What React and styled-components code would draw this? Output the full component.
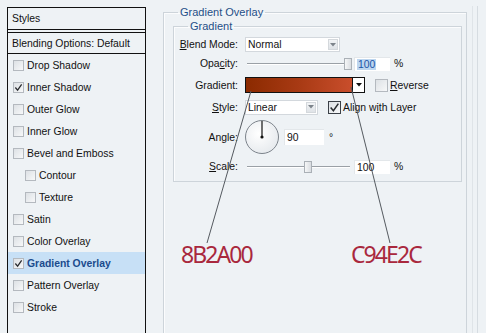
import React from "react";
import styled, { createGlobalStyle } from "styled-components";

const Global = createGlobalStyle`
  html, body { margin: 0; padding: 0; background: #eef2f5; overflow: hidden; }
  body { font-family: "Liberation Sans", Arial, sans-serif; font-size: 10.4px; color: #111; }
  #root { width: 486px; height: 333px; }
`;

const Page = styled.div`
  position: relative;
  display: flex;
  align-items: flex-start;
  width: 486px;
  height: 333px;
  overflow: hidden;
  padding-left: 7px;
  box-sizing: border-box;
`;

const StylesPanel = styled.div`
  margin-top: 7px;
  width: 139px;
  height: 340px;
  box-sizing: border-box;
  border: 1px solid #111;
  border-bottom: none;
  flex: none;
  background: #eef2f5;
`;

const PanelHead = styled.div`
  display: flex;
  align-items: center;
  height: ${(p) => p.$h}px;
  padding-left: 4px;
  border-bottom: ${(p) => (p.$double ? "4px double #111" : "1px solid #111")};
`;

const StyleItem = styled.div`
  display: flex;
  align-items: center;
  gap: 3px;
  height: 22px;
  padding-left: ${(p) => (p.$nested ? 17 : 5)}px;
  background: ${(p) => (p.$active ? "#c7e0f6" : "transparent")};
  color: ${(p) => (p.$active ? "#1b4b8d" : "#111")};
  font-weight: ${(p) => (p.$active ? 700 : 400)};
`;

const Box = styled.span`
  display: inline-flex;
  align-items: center;
  justify-content: center;
  width: ${(p) => p.$size}px;
  height: ${(p) => p.$size}px;
  box-sizing: border-box;
  border: 1px solid ${(p) => (p.$dark ? "#3b4047" : "#b4b9bf")};
  background: linear-gradient(135deg, #dde1e5, #f7f8f9);
  flex: none;
`;

const Main = styled.div`
  display: flex;
  margin-left: 17px;
  margin-top: 6px;
`;

const Outer = styled.fieldset`
  margin: 0;
  min-width: 0;
  width: 304px;
  height: 360px;
  box-sizing: border-box;
  padding: 1px 0 0 9px;
  border: 1px solid #cdd4da;
  box-shadow: inset 1px 1px 0 #fbfcfd;
`;

const Legend = styled.legend`
  padding: 0 2px;
  margin-left: ${(p) => p.$ml}px;
  line-height: 13px;
  font-size: 11px;
  color: #1f4f87;
`;

const Inner = styled.fieldset`
  margin: 0;
  min-width: 0;
  width: 289px;
  box-sizing: border-box;
  padding: 2px 0 5px 0;
  border: 1px solid #cdd4da;
  box-shadow: inset 1px 1px 0 #fbfcfd;
`;

const Row = styled.div`
  display: flex;
  align-items: center;
  height: ${(p) => p.$h}px;
`;

const Label = styled.span`
  width: 64px;
  text-align: right;
  margin-right: 7px;
  flex: none;
`;

const U = styled.span`
  text-decoration: underline;
`;

const Select = styled.div`
  display: flex;
  align-items: center;
  justify-content: space-between;
  width: ${(p) => p.$w}px;
  height: 15px;
  box-sizing: border-box;
  background: #fff;
  border: 1px solid #d3d8dd;
  padding: 0 1px 0 2px;
`;

const DropBtn = styled.span`
  display: inline-flex;
  align-items: center;
  justify-content: center;
  width: 10px;
  height: 11px;
  background: linear-gradient(#f2f4f6, #dfe3e7);
  border: 1px solid #d4d8dc;
  box-sizing: border-box;
`;

const Slider = styled.div`
  position: relative;
  width: 107px;
  height: 14px;
  flex: none;
`;

const Track = styled.div`
  position: absolute;
  left: 2px;
  right: 2px;
  top: 6px;
  height: 1px;
  background: #9aa0a6;
  box-shadow: 0 1px 0 #ffffff;
`;

const Thumb = styled.div`
  position: absolute;
  top: 1px;
  width: 8px;
  height: 12px;
  box-sizing: border-box;
  border: 1px solid #aab0b6;
  background: linear-gradient(90deg, #f6f7f8, #d9dde1);
`;

const Field = styled.div`
  display: flex;
  align-items: center;
  width: ${(p) => p.$w}px;
  height: ${(p) => p.$h || 14}px;
  margin-left: ${(p) => p.$ml}px;
  padding-left: 2px;
  box-sizing: border-box;
  background: #fff;
  border-top: 1px solid #e3e7ea;
  border-left: 1px solid #e3e7ea;
  flex: none;
`;

const Selected = styled.span`
  background: #bdd6ef;
  color: #1b55a8;
  padding: 0 1px;
`;

const Unit = styled.span`
  margin-left: ${(p) => p.$ml}px;
`;

const Swatch = styled.div`
  width: 108px;
  height: 16px;
  box-sizing: border-box;
  border: 1px solid #111;
  background: linear-gradient(90deg, #8b2a00 0%, #a83a14 50%, #c94e2c 100%);
  flex: none;
`;

const ArrowBtn = styled.div`
  display: flex;
  align-items: center;
  justify-content: center;
  width: 12px;
  height: 16px;
  box-sizing: border-box;
  border: 1px solid #111;
  border-left: none;
  background: #fff;
  flex: none;
`;

const CheckLabel = styled.span`
  margin-left: ${(p) => p.$ml}px;
  display: inline-flex;
  align-items: center;
  gap: 2px;
`;

const Dial = styled.svg`
  margin-left: -1px;
  flex: none;
`;

const Annotations = styled.div`
  display: flex;
  margin-top: 61px;
  padding-left: 8px;
  gap: 99px;
`;

const Hex = styled.span`
  font-family: "Noto Sans", "Open Sans", sans-serif;
  font-size: 23px;
  line-height: 23px;
  letter-spacing: -1.9px;
  color: #a9283d;
`;

const Rail = styled.div`
  width: 1px;
  height: 340px;
  margin-left: 10px;
  background: #d6dce1;
  box-shadow: -5px 0 0 #dfe4e8;
`;

const Overlay = styled.svg`
  position: absolute;
  left: 0;
  top: 0;
  pointer-events: none;
`;

const Check = ({ size = 11 }) => (
  <svg width={size - 2} height={size - 2} viewBox="0 0 10 10">
    <polyline points="1.5,5 4,8 8.5,1.5" fill="none" stroke="#2a2d31" strokeWidth="1.4" />
  </svg>
);

const CheckBox = ({ checked, size = 11, dark }) => (
  <Box $size={size} $dark={dark}>{checked && <Check size={size} />}</Box>
);

const Tri = ({ color = "#7d848b" }) => (
  <svg width="6" height="4" viewBox="0 0 6 4">
    <polygon points="0,0 6,0 3,3.5" fill={color} />
  </svg>
);

const items = [
  { name: "Drop Shadow" },
  { name: "Inner Shadow", checked: true },
  { name: "Outer Glow" },
  { name: "Inner Glow" },
  { name: "Bevel and Emboss" },
  { name: "Contour", nested: true },
  { name: "Texture", nested: true },
  { name: "Satin" },
  { name: "Color Overlay" },
  { name: "Gradient Overlay", checked: true, active: true },
  { name: "Pattern Overlay" },
  { name: "Stroke" },
];

const SliderCtl = ({ value }) => (
  <Slider>
    <Track />
    <Thumb style={{ left: `${value}px` }} />
  </Slider>
);

export default function App() {
  return (
    <>
      <Global />
      <Page>
        <StylesPanel>
          <PanelHead $h={21} $double>Styles</PanelHead>
          <PanelHead $h={20}>Blending Options: Default</PanelHead>
          {items.map((it) => (
            <StyleItem key={it.name} $nested={it.nested} $active={it.active}>
              <CheckBox checked={it.checked} />
              <span>{it.name}</span>
            </StyleItem>
          ))}
        </StylesPanel>
        <Main>
          <Outer>
            <Legend $ml={5}>Gradient Overlay</Legend>
            <Inner>
              <Legend $ml={14}>Gradient</Legend>
              <Row $h={19}>
                <Label><U>B</U>lend Mode:</Label>
                <Select $w={95}>
                  <span>Normal</span>
                  <DropBtn><Tri /></DropBtn>
                </Select>
              </Row>
              <Row $h={19}>
                <Label>Opa<U>c</U>ity:</Label>
                <SliderCtl value={99} />
                <Field $w={36} $ml={2}><Selected>100</Selected></Field>
                <Unit $ml={4}>%</Unit>
              </Row>
              <Row $h={24}>
                <Label>Gradient:</Label>
                <Swatch />
                <ArrowBtn><Tri color="#111" /></ArrowBtn>
                <CheckLabel $ml={10}>
                  <CheckBox size={13} />
                  <span><U>R</U>everse</span>
                </CheckLabel>
              </Row>
              <Row $h={20}>
                <Label><U>S</U>tyle:</Label>
                <Select $w={73}>
                  <span>Linear</span>
                  <DropBtn><Tri /></DropBtn>
                </Select>
                <CheckLabel $ml={10}>
                  <CheckBox size={13} checked dark />
                  <span>Align w<U>i</U>th Layer</span>
                </CheckLabel>
              </Row>
              <Row $h={40}>
                <Label>An<U>g</U>le:</Label>
                <Dial width="36" height="36" viewBox="0 0 36 36">
                  <defs>
                    <radialGradient id="dialFill" cx="0.4" cy="0.4" r="0.7">
                      <stop offset="0" stopColor="#ffffff" />
                      <stop offset="1" stopColor="#e4e8ec" />
                    </radialGradient>
                  </defs>
                  <circle cx="18" cy="18" r="16.5" fill="url(#dialFill)" stroke="#7c838b" strokeWidth="1" />
                  <line x1="18" y1="18" x2="18" y2="2" stroke="#111" strokeWidth="1.2" />
                  <circle cx="18" cy="18" r="1.6" fill="#111" />
                </Dial>
                <Field $w={40} $h={16} $ml={4}>90</Field>
                <Unit $ml={5}>°</Unit>
              </Row>
              <Row $h={19}>
                <Label><U>S</U>cale:</Label>
                <SliderCtl value={59} />
                <Field $w={36} $ml={2}>100</Field>
                <Unit $ml={4}>%</Unit>
              </Row>
            </Inner>
            <Annotations>
              <Hex>8B2A00</Hex>
              <Hex>C94E2C</Hex>
            </Annotations>
          </Outer>
          <Rail />
        </Main>
        <Overlay width="486" height="333" viewBox="0 0 486 333">
          <line x1="251" y1="91" x2="207" y2="243" stroke="#555a60" strokeWidth="1" />
          <line x1="351" y1="87" x2="390" y2="243" stroke="#555a60" strokeWidth="1" />
        </Overlay>
      </Page>
    </>
  );
}
